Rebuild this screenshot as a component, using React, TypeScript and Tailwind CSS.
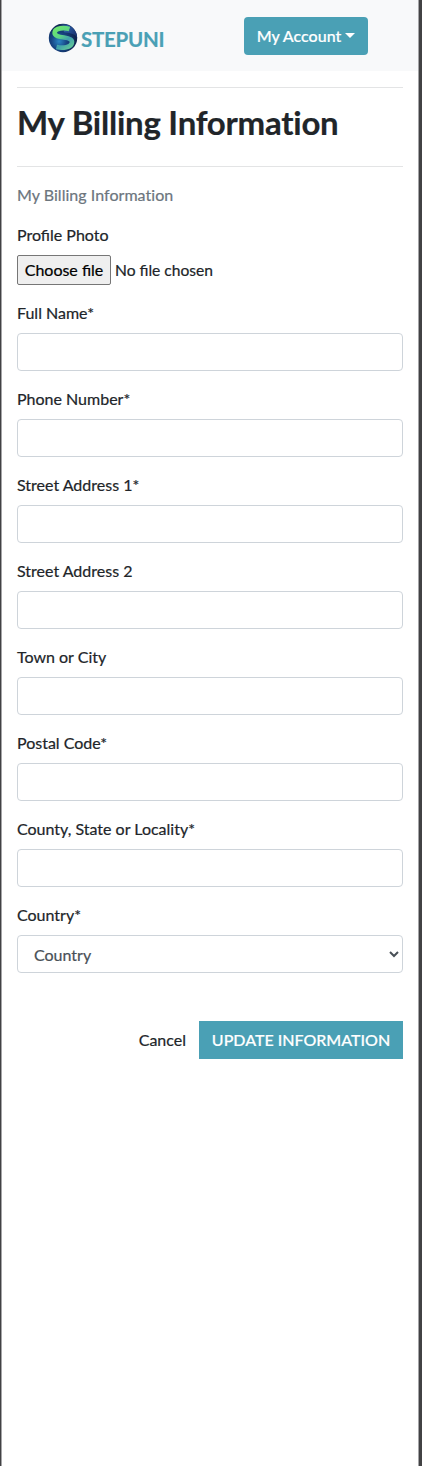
import React from "react";

const fields = [
  "Full Name*",
  "Phone Number*",
  "Street Address 1*",
  "Street Address 2",
  "Town or City",
  "Postal Code*",
  "County, State or Locality*",
];

function Logo() {
  return (
    <svg width="30" height="30" viewBox="0 0 30 30" aria-hidden="true">
      <defs>
        <radialGradient id="globe" cx="0.36" cy="0.62" r="0.6">
          <stop offset="0" stopColor="#2a86c4" />
          <stop offset="0.45" stopColor="#174584" />
          <stop offset="1" stopColor="#10244f" />
        </radialGradient>
        <linearGradient id="top" x1="0" y1="0" x2="1" y2="0.5">
          <stop offset="0" stopColor="#112448" />
          <stop offset="0.5" stopColor="#2a5ca4" />
          <stop offset="1" stopColor="#1b3675" />
        </linearGradient>
        <linearGradient id="ribbon" gradientUnits="userSpaceOnUse" x1="5" y1="4" x2="22" y2="26">
          <stop offset="0" stopColor="#72e868" />
          <stop offset="0.4" stopColor="#5ed583" />
          <stop offset="0.68" stopColor="#3f9fae" />
          <stop offset="1" stopColor="#62c996" />
        </linearGradient>
      </defs>
      <circle cx="15" cy="15" r="14.2" fill="url(#globe)" />
      <path d="M9 2.2C18-1.5 29 4.5 29.2 15c-1.2-4-7-5-12.2-5.6-2.5-.3-1-2.3 1-2.4l4-.3C18 3 13 2.5 9 2.2Z" fill="url(#top)" />
      <path d="M21.5 6C16 4.5 7.5 4.8 6.7 9.2c-.7 4 4.8 4.8 9.3 5.3 5.8.7 8.8 2.5 7.8 5.7-1.2 4-8.8 5.4-15.3 3.7" fill="none" stroke="url(#ribbon)" strokeWidth="4.6" />
    </svg>
  );
}

export default function App() {
  return (
    <div className="h-[1466px] w-full border-l border-r-[3px] border-[#424244] bg-white font-['Lato',sans-serif] text-base leading-6 text-[#212529] [-webkit-text-stroke:0.2px]">
      <div className="h-full border-x border-[#a5a5a7]">
        <header className="flex h-[71px] items-start justify-between bg-[#f8f9fa] pr-[50px] pl-[46px]">
          <a className="mt-[23px] flex items-start text-[#4aa0b5]">
            <Logo />
            <span className="mt-[1px] ml-[3px] text-[20.5px] leading-[30px] font-bold tracking-[-0.25px]">STEPUNI</span>
          </a>
          <button className="mt-[17px] flex h-[38px] w-[124px] items-center justify-center rounded-[4px] bg-[#4aa0b5] text-base font-medium whitespace-nowrap text-white">
            My Account
            <span className="mb-[2px] ml-1 border-x-[5px] border-t-[5px] border-x-transparent border-t-white" />
          </button>
        </header>
        <main className="px-[15px] pt-4">
          <hr className="border-[#e3e4e5]" />
          <h1 className="flex h-[78px] items-start pt-[14px] text-[33px] leading-[40px] font-bold tracking-[-0.25px] whitespace-nowrap [font-variant-ligatures:none]">
            My Billing Information
          </h1>
          <hr className="border-[#e3e4e5]" />
          <p className="mt-4 tracking-[0.04px] text-[#6c757d] [font-variant-ligatures:none]">My Billing Information</p>
          <form className="mt-4">
            <div className="mb-4">
              <label className="mb-2 block">Profile Photo</label>
              <div className="flex h-[30px] items-center gap-1">
                <button type="button" className="h-[30px] w-[94px] rounded-[2px] border border-[#767676] bg-[#efefef] whitespace-nowrap text-black">
                  Choose file
                </button>
                <span className="text-[15.6px]">No file chosen</span>
              </div>
            </div>
            {fields.map((name) => (
              <div key={name} className="mb-4">
                <label className="mb-2 block">{name}</label>
                <input aria-label={name} className="block h-[38px] w-full rounded-[4px] border border-[#ced4da] bg-white px-3" />
              </div>
            ))}
            <label className="mb-2 block">Country*</label>
            <div className="flex h-[38px] items-center justify-between rounded-[4px] border border-[#ced4da] pr-[3px] pl-4 text-[#495057]">
              <span className="pt-[2px]">Country</span>
              <svg width="10" height="8" viewBox="0 0 10 8" fill="none" stroke="#495057" strokeWidth="2">
                <path d="m1 2 4 4 4-4" />
              </svg>
            </div>
            <div className="mt-12 flex items-center justify-end">
              <a className="mr-[13px]">Cancel</a>
              <button type="button" className="h-[38px] w-[204px] bg-[#4aa0b5] font-medium whitespace-nowrap text-white">
                UPDATE INFORMATION
              </button>
            </div>
          </form>
        </main>
      </div>
    </div>
  );
}
